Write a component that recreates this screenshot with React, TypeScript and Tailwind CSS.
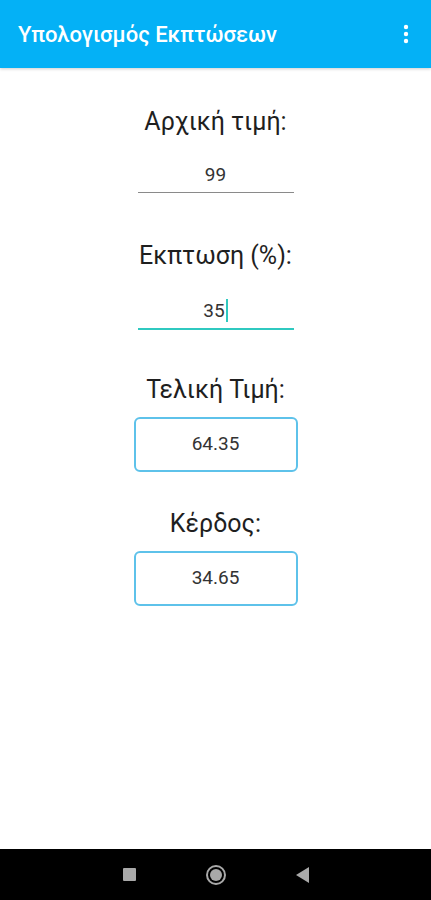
import React from "react";

function MoreIcon() {
  return (
    <svg width="6" height="20" viewBox="0 0 6 20" className="fill-white">
      <circle cx="3" cy="3" r="2.2" />
      <circle cx="3" cy="10" r="2.2" />
      <circle cx="3" cy="17" r="2.2" />
    </svg>
  );
}

function Label({ children }: { children: React.ReactNode }) {
  return <div className="text-[25px] leading-none text-[#1f1f1f] text-center">{children}</div>;
}

function ResultBox({ value }: { value: string }) {
  return (
    <div className="w-[164px] h-[55px] rounded-[6px] border-2 border-[#5ec2ea] flex items-center justify-center text-[19px] text-[#333]">
      {value}
    </div>
  );
}

export default function App() {
  return (
    <div className="w-[431px] h-[900px] flex flex-col bg-white font-['Roboto','Noto_Sans',sans-serif]">
      {/* App bar */}
      <div className="h-[68px] shrink-0 bg-[#04b1f6] flex items-center justify-between pl-[18px] pr-[22px] shadow-[0_1px_3px_rgba(0,0,0,0.2)]">
        <span className="text-white text-[22px] font-medium">Υπολογισμός Εκπτώσεων</span>
        <MoreIcon />
      </div>

      {/* Content */}
      <div className="flex-1 flex flex-col items-center pt-[41px]">
        <Label>Αρχική τιμή:</Label>
        <div className="mt-[31px] w-[156px] border-b border-[#8a8a8a] pb-[7px] text-center text-[19px] text-[#333] leading-[20px]">
          99
        </div>

        <div className="mt-[50px]">
          <Label>Εκπτωση (%):</Label>
        </div>
        <div className="mt-[31px] w-[156px] border-b-2 border-[#2fc9c0] pb-[6px] text-center text-[19px] text-[#333] leading-[20px] flex justify-center items-center">
          <span>35</span>
          <span className="inline-block w-[2px] h-[23px] bg-[#2fc9c0] ml-[1px]" />
        </div>

        <div className="mt-[47px]">
          <Label>Τελική Τιμή:</Label>
        </div>
        <div className="mt-[15px]">
          <ResultBox value="64.35" />
        </div>

        <div className="mt-[39px]">
          <Label>Κέρδος:</Label>
        </div>
        <div className="mt-[15px]">
          <ResultBox value="34.65" />
        </div>
      </div>

      {/* Nav bar */}
      <div className="h-[51px] shrink-0 bg-black flex items-center justify-center gap-[70px]">
        <div className="w-[13px] h-[13px] bg-[#a9a9a9] rounded-[1px]" />
        <div className="w-[20px] h-[20px] rounded-full border-2 border-[#a9a9a9] flex items-center justify-center">
          <div className="w-[12px] h-[12px] rounded-full bg-[#a9a9a9]" />
        </div>
        <svg width="13" height="16" viewBox="0 0 13 16">
          <path d="M13 0 L0 8 L13 16 Z" fill="#a9a9a9" />
        </svg>
      </div>
    </div>
  );
}
